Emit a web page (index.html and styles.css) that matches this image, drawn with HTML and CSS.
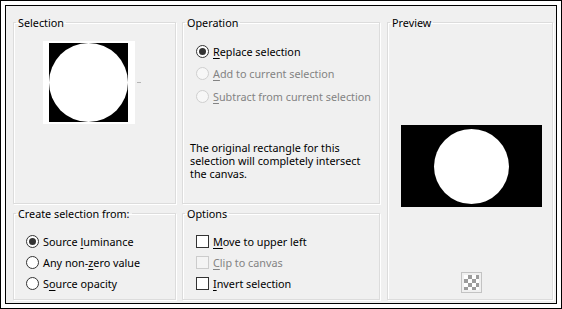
FILE: index.html
```html
<!DOCTYPE html>
<html lang="en">
<head>
  <meta charset="UTF-8" />
  <title>Selection from mask</title>
  <link rel="stylesheet" href="styles.css">
</head>
<body>
  <div class="frame">
    <div class="dialog">
      <fieldset class="group sel">
        <legend>Selection</legend>
        <div class="thumb-row">
          <div class="thumb"><div class="thumb-img"><div class="disc"></div></div></div>
          <span class="tick"></span>
        </div>
      </fieldset>

      <fieldset class="group op">
        <legend>Operation</legend>
        <div class="rows op-rows">
          <div class="row"><span class="radio on"></span><span><u>R</u>eplace selection</span></div>
          <div class="row off"><span class="radio"></span><span><u>A</u>dd to current selection</span></div>
          <div class="row off"><span class="radio"></span><span><u>S</u>ubtract from current selection</span></div>
        </div>
        <p class="note">The original rectangle for this<br>selection will completely intersect<br>the canvas.</p>
      </fieldset>

      <fieldset class="group preview">
        <legend>Preview</legend>
        <div class="pv"><div class="disc"></div></div>
        <span class="checker"></span>
      </fieldset>

      <fieldset class="group create">
        <legend>Create selection from:</legend>
        <div class="rows small-rows">
          <div class="row"><span class="radio on"></span><span>Source <u>l</u>uminance</span></div>
          <div class="row"><span class="radio"></span><span>Any non-<u>z</u>ero value</span></div>
          <div class="row"><span class="radio"></span><span>S<u>o</u>urce opacity</span></div>
        </div>
      </fieldset>

      <fieldset class="group opts">
        <legend>Options</legend>
        <div class="rows small-rows">
          <div class="row"><span class="check"></span><span><u>M</u>ove to upper left</span></div>
          <div class="row off"><span class="check"></span><span><u>C</u>lip to canvas</span></div>
          <div class="row"><span class="check"></span><span><u>I</u>nvert selection</span></div>
        </div>
      </fieldset>
    </div>
  </div>
</body>
</html>
```

FILE: styles.css
```css
* {
  box-sizing: border-box;
  margin: 0;
  padding: 0;
}
body {
  background-color: #fff;
  font-family: 'Noto Sans', 'Liberation Sans', sans-serif;
  font-size: 10.8px;
  color: #000;
}
.frame {
  width: 562px;
  height: 309px;
  border: 1px solid #000;
  padding: 4px;
  background-color: #fff;
}
.dialog {
  height: 100%;
  border: 1px solid #000;
  background-color: #f0f0f0;
  padding: 9px 3px 3px 7px;
  display: grid;
  grid-template-columns: 163px 198px 167px;
  grid-template-rows: 189px 94px;
  column-gap: 6px;
  row-gap: 2px;
}
.group {
  border: 1px solid #dcdcdc;
  box-shadow: inset 1px 1px 0 #fff, 1px 1px 0 #fff;
  min-width: 0;
  display: flex;
  flex-direction: column;
}
.group legend {
  margin-left: 2px;
  padding: 0 2px;
  line-height: 14px;
  height: 14px;
  padding-top: 1px;
}
.preview {
  grid-column: 3;
  grid-row: 1 / 3;
  margin-left: 1px;
}
.create {
  grid-column: 1;
  grid-row: 2;
}
.opts {
  grid-column: 2;
  grid-row: 2;
}

/* selection thumbnail */
.thumb-row {
  display: flex;
  align-items: center;
  margin: 12px 0 0 29px;
}
.thumb {
  width: 92px;
  height: 83px;
  background-color: #fff;
  padding: 2px 6px;
}
.thumb-img {
  width: 79px;
  height: 79px;
  background-color: #000;
}
.disc {
  width: 100%;
  height: 100%;
  border-radius: 50%;
  background-color: #fff;
}
.tick {
  width: 4px;
  height: 1px;
  margin-left: 2px;
  background-color: #b4b4b4;
}

/* radio and check rows */
.rows {
  display: flex;
  flex-direction: column;
}
.op-rows {
  margin: 11px 0 0 13px;
}
.op-rows .row {
  height: 22.5px;
}
.small-rows {
  margin: 11px 0 0 12px;
}
.small-rows .row {
  height: 21px;
}
.opts .small-rows {
  margin-left: 13px;
}
.row {
  display: flex;
  align-items: center;
  gap: 4px;
  white-space: nowrap;
}
.row u {
  text-decoration-thickness: 1px;
  text-underline-offset: 2px;
}
.row.off {
  color: #838383;
}
.radio {
  width: 13px;
  height: 13px;
  border-radius: 50%;
  border: 1px solid #333;
  background-color: #fff;
  display: flex;
  align-items: center;
  justify-content: center;
  flex-shrink: 0;
}
.radio.on::after {
  content: "";
  width: 7px;
  height: 7px;
  border-radius: 50%;
  background-color: #333;
}
.row.off .radio {
  border-color: #cfcfcf;
  background-color: #f7f7f7;
}
.check {
  width: 13px;
  height: 13px;
  border: 1px solid #333;
  background-color: #fff;
  flex-shrink: 0;
}
.row.off .check {
  border-color: #cccccc;
  background-color: #f4f4f4;
}
.note {
  margin: 33px 0 0 7px;
  line-height: 13px;
}

/* preview */
.pv {
  width: 141px;
  height: 82px;
  margin: 96px 0 0 13px;
  background-color: #000;
  display: flex;
  align-items: center;
  justify-content: center;
}
.pv .disc {
  width: 75px;
  height: 75px;
}
.checker {
  width: 21px;
  height: 21px;
  margin: 65px 0 0 73px;
  border: 1px solid #c3c3c3;
  padding: 2px;
  background-color: #f7f7f7;
  background-image: conic-gradient(#9c9c9c 25%, #fff 0 50%, #9c9c9c 0 75%, #fff 0);
  background-size: 8px 8px;
  background-clip: content-box;
  background-origin: content-box;
}
```
